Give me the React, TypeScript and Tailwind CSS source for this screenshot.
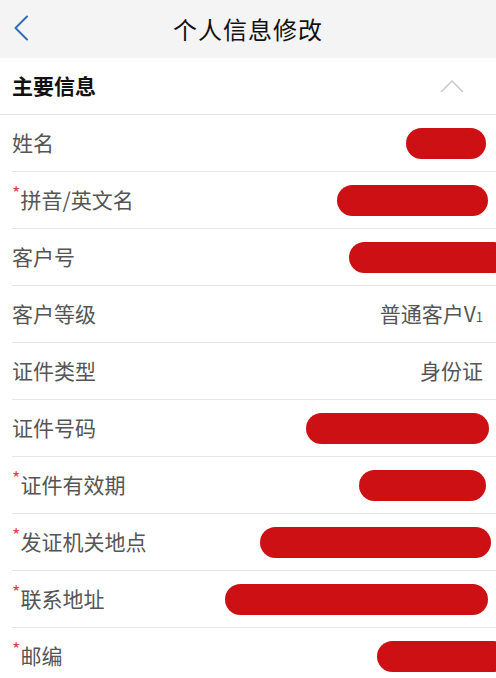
import React from 'react';

type Row = {
  label: string;
  required?: boolean;
  value?: React.ReactNode;
  blob?: { w: number; mr: string };
};

// 红色涂抹块（截图里的打码）
const rows: Row[] = [
  { label: '姓名', blob: { w: 80, mr: 'mr-[10px]' } },
  { label: '拼音/英文名', required: true, blob: { w: 151, mr: 'mr-[8px]' } },
  { label: '客户号', blob: { w: 160, mr: '-mr-[13px]' } },
  {
    label: '客户等级',
    value: (
      <span>
        普通客户V<span className="text-[13px]">1</span>
      </span>
    ),
  },
  { label: '证件类型', value: '身份证' },
  { label: '证件号码', blob: { w: 183, mr: 'mr-[7px]' } },
  { label: '证件有效期', required: true, blob: { w: 127, mr: 'mr-[10px]' } },
  { label: '发证机关地点', required: true, blob: { w: 231, mr: 'mr-[5px]' } },
  { label: '联系地址', required: true, blob: { w: 263, mr: 'mr-[8px]' } },
  { label: '邮编', required: true, blob: { w: 132, mr: '-mr-[13px]' } },
];

export default function App() {
  return (
    <div
      className="w-[496px] h-[678px] overflow-hidden bg-white"
      style={{ fontFamily: '"Noto Sans CJK SC", "Noto Sans", sans-serif' }}
    >
      {/* 顶部导航 */}
      <div className="relative h-[58px] bg-[#f4f4f4] flex items-center justify-center">
        <svg
          className="absolute left-[13px] top-[15px]"
          width="16"
          height="26"
          viewBox="0 0 16 26"
          fill="none"
        >
          <path d="M14 1.5L2.5 13L14 24.5" stroke="#2f6db5" strokeWidth="2" strokeLinecap="round" strokeLinejoin="round" />
        </svg>
        <span className="text-[24px] text-[#111] tracking-[1px]">个人信息修改</span>
      </div>

      {/* 主要信息 */}
      <div className="h-[57px] border-b border-[#e4e4e4] flex items-center justify-between pl-3 pr-[32px]">
        <span className="text-[21px] font-bold text-[#111]">主要信息</span>
        <svg width="24" height="14" viewBox="0 0 24 14" fill="none">
          <path d="M1.5 12.5L12 2L22.5 12.5" stroke="#cbcbcb" strokeWidth="1.6" strokeLinecap="round" strokeLinejoin="round" />
        </svg>
      </div>

      <div className="pl-3">
        {rows.map((r) => (
          <div
            key={r.label}
            className="h-[57px] border-b border-[#e6e6e6] flex items-center justify-between"
          >
            <span className="text-[21px] text-[#555] flex items-start">
              {r.required && <span className="text-[#e04848] text-[18px] leading-none -mt-[1px]">*</span>}
              {r.label}
            </span>
            {r.blob ? (
              <div
                className={`h-[31px] rounded-full bg-[#cc1014] shrink-0 ${r.blob.mr}`}
                style={{ width: r.blob.w }}
              />
            ) : (
              <span className="text-[21px] text-[#555] mr-[13px]">{r.value}</span>
            )}
          </div>
        ))}
      </div>
    </div>
  );
}
